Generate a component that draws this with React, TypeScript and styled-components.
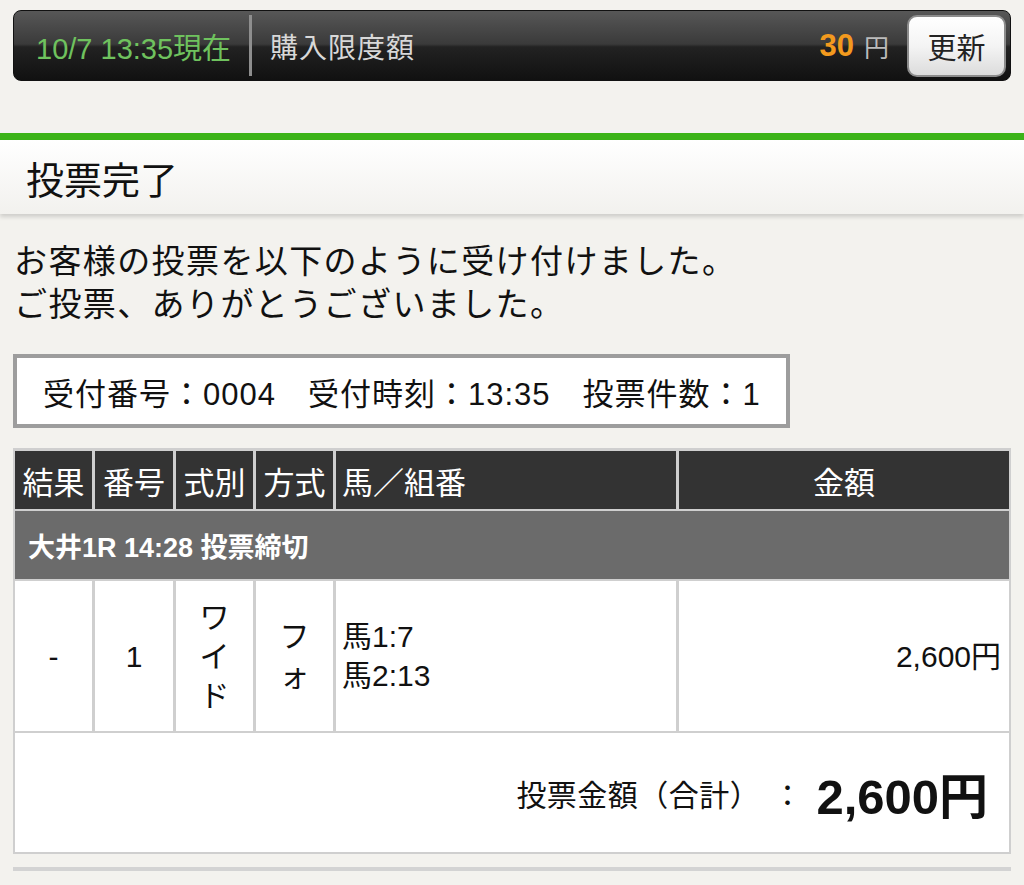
import React from "react";
import styled, { createGlobalStyle } from "styled-components";

const GlobalStyle = createGlobalStyle`
  body {
    margin: 0;
    background: #f3f2ee;
    font-family: "Liberation Sans", "Noto Sans CJK JP", sans-serif;
    color: #111;
  }
`;

const TopBar = styled.div`
  display: flex;
  align-items: center;
  margin: 10px 13px 0;
  height: 71px;
  box-sizing: border-box;
  border: 1px solid #111;
  border-radius: 8px;
  background: linear-gradient(#575757 0%, #3a3a3a 48%, #222 52%, #111 100%);
  padding: 0 4px 0 22px;
`;

const Stamp = styled.span`
  color: #6fc25e;
  font-size: 29px;
  padding-right: 18px;
`;

const Divider = styled.span`
  align-self: stretch;
  width: 3px;
  margin: 4px 0;
  background: #8e8e8e;
`;

const Label = styled.span`
  flex: 1;
  color: #d8d8d8;
  font-size: 28px;
  letter-spacing: 1px;
  padding-left: 18px;
`;

const Limit = styled.span`
  color: #f39a1e;
  font-weight: bold;
  font-size: 31px;
`;

const Yen = styled.span`
  color: #bbb;
  font-size: 25px;
  margin: 0 18px 0 10px;
`;

const RefreshButton = styled.button`
  width: 99px;
  height: 62px;
  border: 2px solid #8c8c8c;
  border-radius: 10px;
  background: linear-gradient(#ffffff 0%, #f4f4f4 50%, #dcdcdc 100%);
  font-family: inherit;
  font-size: 29px;
  color: #222;
  padding: 0;
`;

const GreenRule = styled.div`
  margin-top: 52px;
  height: 7px;
  background: #3bb318;
`;

const Heading = styled.h1`
  margin: 0;
  height: 74px;
  display: flex;
  align-items: center;
  padding-left: 26px;
  font-size: 38px;
  font-weight: normal;
  background: linear-gradient(#ffffff, #f2f1ee);
  box-shadow: 0 3px 4px rgba(0, 0, 0, 0.15);
`;

const Content = styled.div`
  padding: 0 13px;
`;

const Message = styled.p`
  margin: 26px 0 0 1px;
  font-size: 33px;
  line-height: 43px;
  letter-spacing: 1.4px;
`;

const InfoBox = styled.div`
  margin-top: 28px;
  width: 777px;
  height: 74px;
  box-sizing: border-box;
  border: 4px solid #9d9d9d;
  background: #fff;
  display: flex;
  align-items: center;
  padding-left: 26px;
  font-size: 31px;
  letter-spacing: 1px;
  white-space: pre;
`;

const Table = styled.div`
  margin-top: 20px;
  display: grid;
  grid-template-columns: 77px 78px 77px 77px 340px 1fr;
  grid-template-rows: 58px 68px 150px 119px;
  column-gap: 3px;
  row-gap: 2px;
  padding: 3px 2px 2px;
  background: #cfcfcf;
`;

const HeadCell = styled.div<{ $left?: boolean }>`
  background: #333;
  color: #fff;
  font-size: 31px;
  display: flex;
  align-items: center;
  justify-content: ${(p) => (p.$left ? "flex-start" : "center")};
  padding-left: ${(p) => (p.$left ? "6px" : "0")};
  white-space: nowrap;
`;

const RaceRow = styled.div`
  grid-column: 1 / -1;
  background: #6b6b6b;
  color: #fff;
  font-weight: bold;
  font-size: 27px;
  display: flex;
  align-items: center;
  padding-left: 13px;
`;

const Cell = styled.div<{ $align?: "left" | "center" | "right" }>`
  background: #fff;
  font-size: 30px;
  line-height: 39px;
  display: flex;
  flex-direction: column;
  justify-content: center;
  align-items: ${(p) =>
    p.$align === "left" ? "flex-start" : p.$align === "right" ? "flex-end" : "center"};
  padding: 0 ${(p) => (p.$align === "right" ? "8px" : "6px")};
`;

const Char = styled.span`
  display: block;
`;

const TotalRow = styled.div`
  grid-column: 1 / -1;
  background: #fff;
  display: flex;
  align-items: center;
  justify-content: flex-end;
  padding-right: 21px;
`;

const TotalLabel = styled.span`
  font-size: 30px;
  letter-spacing: 0.5px;
`;

const Colon = styled.span`
  font-size: 30px;
  margin: 0 14px 0 12px;
`;

const TotalAmount = styled.span`
  font-size: 49px;
  font-weight: bold;
`;

const BottomRule = styled.div`
  margin-top: 13px;
  height: 4px;
  background: #d3d3d3;
`;

const Stacked = ({ text }: { text: string }) => (
  <>
    {text.split("").map((c, i) => (
      <Char key={i}>{c}</Char>
    ))}
  </>
);

export default function App() {
  return (
    <>
      <GlobalStyle />
      <TopBar>
        <Stamp>10/7 13:35現在</Stamp>
        <Divider />
        <Label>購入限度額</Label>
        <Limit>30</Limit>
        <Yen>円</Yen>
        <RefreshButton>更新</RefreshButton>
      </TopBar>
      <GreenRule />
      <Heading>投票完了</Heading>
      <Content>
        <Message>
          お客様の投票を以下のように受け付けました。
          <br />
          ご投票、ありがとうございました。
        </Message>
        <InfoBox>受付番号：0004　受付時刻：13:35　投票件数：1</InfoBox>
        <Table>
          <HeadCell>結果</HeadCell>
          <HeadCell>番号</HeadCell>
          <HeadCell>式別</HeadCell>
          <HeadCell>方式</HeadCell>
          <HeadCell $left>馬／組番</HeadCell>
          <HeadCell>金額</HeadCell>
          <RaceRow>大井1R 14:28 投票締切</RaceRow>
          <Cell>-</Cell>
          <Cell>1</Cell>
          <Cell>
            <Stacked text="ワイド" />
          </Cell>
          <Cell>
            <Stacked text="フォ" />
          </Cell>
          <Cell $align="left">
            <span>馬1:7</span>
            <span>馬2:13</span>
          </Cell>
          <Cell $align="right">2,600円</Cell>
          <TotalRow>
            <TotalLabel>投票金額（合計）</TotalLabel>
            <Colon>：</Colon>
            <TotalAmount>2,600円</TotalAmount>
          </TotalRow>
        </Table>
        <BottomRule />
      </Content>
    </>
  );
}
